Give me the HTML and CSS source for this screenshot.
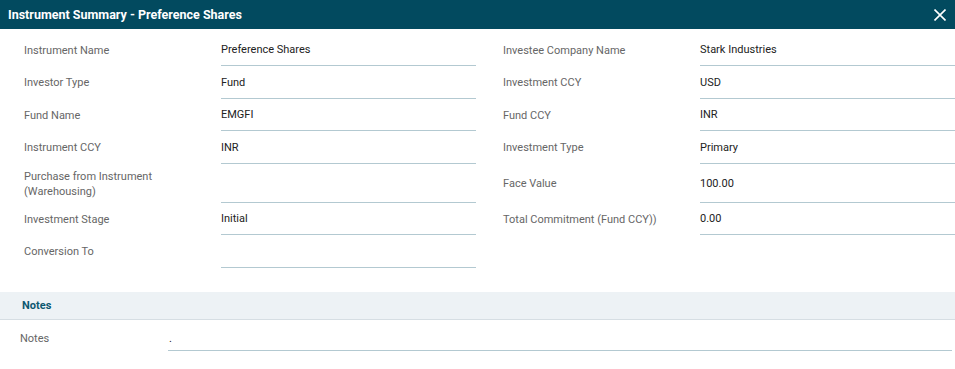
FILE: index.html
```html
<!DOCTYPE html>
<html lang="en">
<head>
  <meta charset="UTF-8">
  <meta name="viewport" content="width=device-width, initial-scale=1.0">
  <title>Instrument Summary</title>
  <link rel="stylesheet" href="styles.css">
</head>
<body>
  <div class="modal">
    <div class="modal-header">
      <span class="modal-title">Instrument Summary - Preference Shares</span>
      <button class="close-btn" aria-label="Close">
        <svg width="12" height="12" viewBox="0 0 12 12">
          <path d="M0.5 0.5 L11.5 11.5 M11.5 0.5 L0.5 11.5" stroke="#fff" stroke-width="1.6" fill="none"/>
        </svg>
      </button>
    </div>

    <div class="summary">
      <div class="field"><div class="label">Instrument Name</div><div class="value">Preference Shares</div></div>
      <div class="field"><div class="label">Investee Company Name</div><div class="value">Stark Industries</div></div>

      <div class="field"><div class="label">Investor Type</div><div class="value">Fund</div></div>
      <div class="field"><div class="label">Investment CCY</div><div class="value">USD</div></div>

      <div class="field"><div class="label">Fund Name</div><div class="value">EMGFI</div></div>
      <div class="field"><div class="label">Fund CCY</div><div class="value">INR</div></div>

      <div class="field"><div class="label">Instrument CCY</div><div class="value">INR</div></div>
      <div class="field"><div class="label">Investment Type</div><div class="value">Primary</div></div>

      <div class="field"><div class="label">Purchase from Instrument (Warehousing)</div><div class="value"></div></div>
      <div class="field"><div class="label">Face Value</div><div class="value">100.00</div></div>

      <div class="field"><div class="label">Investment Stage</div><div class="value">Initial</div></div>
      <div class="field"><div class="label">Total Commitment (Fund CCY))</div><div class="value">0.00</div></div>

      <div class="field"><div class="label">Conversion To</div><div class="value"></div></div>
      <div class="field empty"></div>
    </div>

    <div class="section-head">Notes</div>
    <div class="notes-row">
      <div class="label">Notes</div>
      <div class="value">.</div>
    </div>
  </div>
</body>
</html>
```

FILE: styles.css
```css
body {
  margin: 0;
  font-family: Roboto, "Liberation Sans", sans-serif;
  font-size: 11px;
  background: #fff;
}

.modal {
  width: 955px;
}

.modal-header {
  height: 29px;
  background: #024a5f;
  display: flex;
  align-items: center;
  justify-content: space-between;
  padding: 0 9px 0 8px;
  box-sizing: border-box;
}

.modal-title {
  color: #fff;
  font-weight: 700;
  font-size: 12.5px;
}

.close-btn {
  background: none;
  border: none;
  padding: 0;
  display: flex;
  cursor: pointer;
}

.summary {
  display: grid;
  grid-template-columns: 476px 476px;
  column-gap: 3px;
  padding-top: 4.5px;
}

.field {
  display: flex;
  min-height: 32.5px;
  padding-left: 24px;
}

.field .label {
  width: 197px;
  color: #666;
  line-height: 15px;
  padding: 5px 20px 4px 0;
  box-sizing: border-box;
  display: flex;
  align-items: center;
}

.field .value {
  flex: 1;
  color: #222;
  border-bottom: 1px solid #b3c9d1;
  display: flex;
  align-items: center;
  padding: 5px 0 4px;
}

.section-head {
  margin-top: 24.5px;
  height: 27px;
  background: #edf2f5;
  border-bottom: 1px solid #d6dee3;
  color: #0d5870;
  font-weight: 700;
  padding-left: 22px;
  display: flex;
  align-items: center;
}

.notes-row {
  display: flex;
  padding: 0 3px 0 20px;
  min-height: 31px;
}

.notes-row .label {
  width: 148px;
  color: #666;
  display: flex;
  align-items: flex-end;
  padding-bottom: 6px;
}

.notes-row .value {
  flex: 1;
  color: #222;
  border-bottom: 1px solid #b3c9d1;
  display: flex;
  align-items: flex-end;
  padding-left: 1px;
  padding-bottom: 5px;
}
```
